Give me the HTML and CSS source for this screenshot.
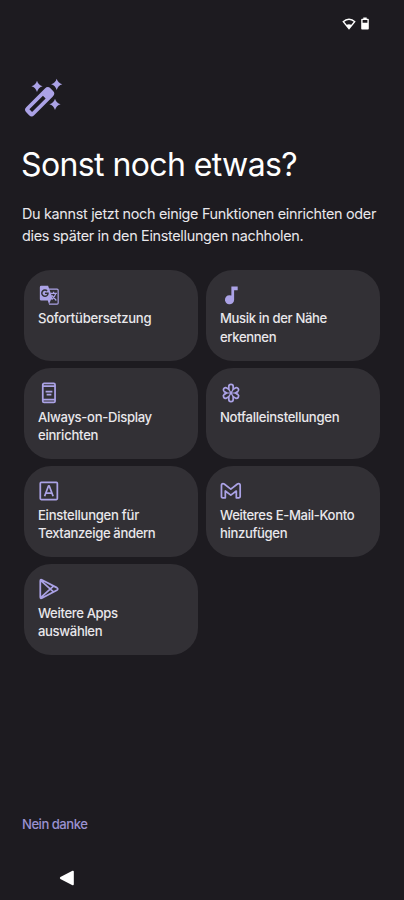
FILE: index.html
```
<!DOCTYPE html>
<html lang="de">
<head>
<meta charset="utf-8">
<title>Sonst noch etwas?</title>
<link rel="stylesheet" href="styles.css">
</head>
<body>
<div class="screen">
  <div class="status">
    <svg class="wifi" viewBox="0 0 14 12"><path fill-rule="evenodd" d="M0.3 3.4Q7-2.2 13.7 3.4L7 11.7ZM2.3 3.7L4.7 6.7Q7 5.6 9.3 6.7L11.7 3.7Q7 .4 2.3 3.7Z"/></svg>
    <svg class="battery" viewBox="0 0 8 13"><path fill-rule="evenodd" d="M2.3 0.5h3.4v1.2H7q.8 0 .8.8v9q0 .9-.8.9H1q-.8 0-.8-.9v-9q0-.8.8-.8h1.3ZM1.6 3.1v2.6h4.8V3.1Z"/></svg>
  </div>
  <svg class="wand" viewBox="0 0 40 40">
    <path transform="translate(16.7 23.7) rotate(-45)" fill-rule="evenodd" d="M-13.5-5.6H13Q17-5.6 17-1.9V1.9Q17 5.6 13 5.6H-13.5Q-17 5.6-17 2V-2Q-17-5.6-13.5-5.6ZM-12.7-1.9V1.9H6.5V-1.9Z"/>
    <path id="star" d="M14 2.7Q15.3 7 19.6 8.3Q15.3 9.6 14 13.9Q12.7 9.6 8.4 8.3Q12.7 7 14 2.7Z"/>
    <use href="#star" x="19.7" y="-2"/>
    <use href="#star" x="18" y="18"/>
  </svg>
  <h1>Sonst noch etwas?</h1>
  <p class="intro"><span class="i1">Du kannst jetzt noch einige Funktionen einrichten oder</span><br><span class="i2">dies später in den Einstellungen nachholen.</span></p>
  <div class="grid">
    <div class="card">
      <svg class="icon" viewBox="0 0 24 24"><path class="fill" fill-rule="evenodd" d="M3.5 2H11l1.6 4.2L16.4 17l-2.2 0L12 22.2 10.7 18H3.5Q2 18 2 16.5v-13Q2 2 3.5 2ZM7.6 5.7a4.2 4.2 0 1 0 4.1 3.5H7.6v1.6h2.4a2.5 2.5 0 1 1-.7-2.7l1.2-1.2A4.1 4.1 0 0 0 7.6 5.7Z"/><path class="thin" d="M12 5.6h8.8q1.2 0 1.2 1.2v14q0 1.2-1.2 1.2H12M13.6 10.2h7M17 8.5v1.7M19.5 10.2Q18.2 14.5 15 16.6M14.8 12.2L20 18"/></svg>
      <div class="label l1">Sofortübersetzung</div>
    </div>
    <div class="card">
      <svg class="icon" viewBox="0 0 24 24"><path class="fill" d="M12.4 2.6V12.6A5 5 0 1 0 15.4 17.2V6.8H19.3V2.6Z"/></svg>
      <div class="label"><span class="l2">Musik in der Nähe</span><br><span class="l3">erkennen</span></div>
    </div>
    <div class="card">
      <svg class="icon" viewBox="0 0 24 24"><rect class="line" x="5.2" y="1.5" width="13.4" height="20.8" rx="1.4"/><path class="line" d="M5.2 4.6h13.4M5.2 19.2h13.4M8.3 10.4h7.4M9.4 13.7h5.2"/></svg>
      <div class="label"><span class="l4">Always-on-Display</span><br><span class="l5">einrichten</span></div>
    </div>
    <div class="card">
      <svg class="icon" viewBox="0 0 24 24"><path class="line" d="M9.6 8V4.9a2.4 2.4 0 0 1 4.8 0V8L17 6.4a2.4 2.4 0 0 1 2.4 4.1L16.7 12l2.7 1.5a2.4 2.4 0 0 1-2.4 4.1L14.4 16v3.1a2.4 2.4 0 0 1-4.8 0V16L7 17.6a2.4 2.4 0 0 1-2.4-4.1L7.3 12 4.6 10.5a2.4 2.4 0 0 1 2.4-4.1Z"/><path class="thin" d="M9.6 8L14.4 16M14.4 8L9.6 16M7.3 12h9.4"/></svg>
      <div class="label l6">Notfalleinstellungen</div>
    </div>
    <div class="card">
      <svg class="icon" viewBox="0 0 24 24"><rect class="line" x="2.5" y="2.7" width="18.6" height="18.6" rx="1"/><path class="line" d="M7.2 17.7L11.5 6.3h.7L16.5 17.7M8.8 14.2h6.1"/></svg>
      <div class="label"><span class="l7">Einstellungen für</span><br><span class="l8">Textanzeige ändern</span></div>
    </div>
    <div class="card">
      <svg class="icon" viewBox="0 0 24 24"><path class="line" d="M1.6 6Q1.6 4 3.3 4Q4 4 4.6 4.4L11.8 10 19 4.4Q19.6 4 20.3 4Q22 4 22 6V18q0 1.4-1.3 1.4H17.8V12l-6 4.5L5.8 12v7.4H2.9q-1.3 0-1.3-1.4Z"/></svg>
      <div class="label"><span class="l9">Weiteres E-Mail-Konto</span><br><span class="l10">hinzufügen</span></div>
    </div>
    <div class="card">
      <svg class="icon" viewBox="0 0 24 24"><path class="line" d="M2.5 3.5Q2.5 1.1 4.5 2.1L20.5 10.5Q22.7 12 20.5 13.4L4.5 21.9Q2.5 22.9 2.5 20.6ZM3.2 2.8l13.7 12.4M3.2 21.2l13.7-12.4"/></svg>
      <div class="label"><span class="l11">Weitere Apps</span><br><span class="l12">auswählen</span></div>
    </div>
  </div>
  <div class="skip">Nein danke</div>
  <div class="nav"><svg class="back" viewBox="0 0 16 16"><path d="M13.5.8Q14.8.4 14.8 1.8v12.4q0 1.4-1.3 1L1.4 8.9Q.2 8 1.4 7.1Z"/></svg></div>
</div>
</body>
</html>
```
FILE: styles.css
```
* { box-sizing: border-box; }
body { margin: 0; background: #1d1b20; }
.screen {
  width: 404px; height: 900px; overflow: hidden;
  display: flex; flex-direction: column;
  background: #1d1b20; color: #e9e7eb;
  font-family: Inter, sans-serif;
}
svg { display: block; flex: none; }
.status { display: flex; height: 78px; padding: 17px 35px 0 0; justify-content: flex-end; gap: 5px; fill: #fff; }
.wifi { width: 14px; height: 12px; margin-top: 1px; }
.battery { width: 8px; height: 13px; }
.wand { width: 40px; height: 40px; margin-left: 23px; fill: #aba2e6; }
h1 { margin: 27px 0 0 21px; height: 40px; line-height: 40px; font-size: 32px; font-weight: 400; color: #fff; white-space: nowrap; letter-spacing: -0.6px; }
.intro { margin: 18px 0 0 22px; font-size: 14.4px; line-height: 21.7px; height: 44px; white-space: nowrap; }
.i1 { letter-spacing: -0.31px; }
.i2 { letter-spacing: -0.32px; }
.grid { display: grid; grid-template-columns: 174.5px 174.5px; grid-auto-rows: 91px; gap: 7.2px 7.5px; margin: 22.5px 0 0 23.7px; }
.card { background: #323035; border-radius: 27px; padding: 14.4px 0 0 14.3px; }
.icon { width: 22px; height: 22px; }
.fill { fill: #aba2e6; }
.line, .thin { fill: none; stroke: #aba2e6; stroke-width: 1.9; stroke-linejoin: round; }
.thin { stroke-width: 1.3; }
.label { margin-top: 3.6px; font-size: 13.1px; line-height: 18.2px; font-weight: 500; white-space: nowrap; }
.l1 { letter-spacing: -0.26px; }
.l2 { letter-spacing: -0.35px; }
.l3 { letter-spacing: -0.35px; }
.l4 { letter-spacing: -0.31px; }
.l5 { letter-spacing: -0.25px; }
.l6 { letter-spacing: -0.27px; }
.l7 { letter-spacing: -0.27px; }
.l8 { letter-spacing: -0.36px; }
.l9 { letter-spacing: -0.32px; }
.l10 { letter-spacing: -0.36px; }
.l11 { letter-spacing: -0.35px; }
.l12 { letter-spacing: -0.35px; }
.skip { margin: 159.5px 0 0 22px; height: 18px; line-height: 18px; font-size: 13.1px; font-weight: 500; letter-spacing: -0.5px; color: #9a91d0; }
.nav { margin: 37.5px 0 0 59px; }
.back { width: 16px; height: 16px; fill: #fff; }
```
